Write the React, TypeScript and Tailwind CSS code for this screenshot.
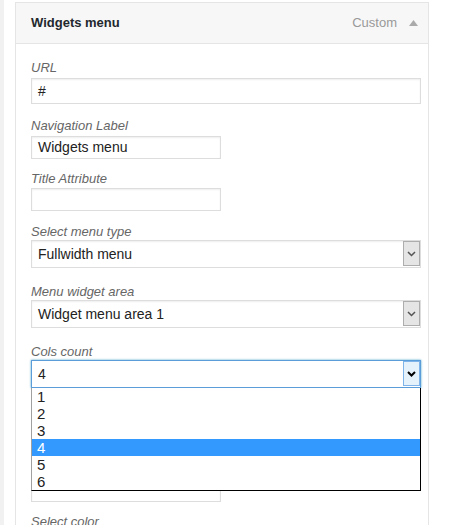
import React from 'react'

const font = { fontFamily: '"Liberation Sans", Arial, sans-serif' }

function Label({ children }: { children: React.ReactNode }) {
  return <div className="text-[13px] leading-[15px] italic text-[#666]">{children}</div>
}

function Chevron({ focused }: { focused?: boolean }) {
  return (
    <svg width="9" height="6" viewBox="0 0 9 6">
      <polyline
        points="1,1 4.5,4.5 8,1"
        fill="none"
        stroke={focused ? '#000' : '#555'}
        strokeWidth={focused ? 2 : 1.5}
      />
    </svg>
  )
}

function Select({ value, focused }: { value: string; focused?: boolean }) {
  return (
    <div
      className={
        'relative h-[28px] w-[390px] border bg-white pl-[6px] text-[14px] leading-[26px] text-[#222] ' +
        (focused ? 'border-[#5b9dd9] shadow-[0_0_2px_rgba(30,140,190,0.8)]' : 'border-[#ddd] shadow-[inset_0_1px_2px_rgba(0,0,0,0.07)]')
      }
    >
      {value}
      <div
        className={
          'absolute top-0 right-0 bottom-[1px] flex w-[17px] items-center justify-center border ' +
          (focused ? 'border-[#7eb4ea] bg-[#e5f1fb]' : 'border-[#adadad] bg-[#e5e5e5]')
        }
      >
        <Chevron focused={focused} />
      </div>
    </div>
  )
}

function Input({ value, wide, h }: { value?: string; wide?: boolean; h: string }) {
  return (
    <div
      className={
        'border border-[#ddd] bg-white pl-[6px] text-[14px] text-[#222] shadow-[inset_0_1px_2px_rgba(0,0,0,0.07)] ' +
        (wide ? 'w-[390px] ' : 'w-[190px] ') +
        h
      }
    >
      {value}
    </div>
  )
}

export default function App() {
  const options = ['1', '2', '3', '4', '5', '6']
  return (
    <div className="flex h-[525px] w-[453px] overflow-hidden bg-white" style={font}>
      <div className="w-[4px] shrink-0 bg-[#f1f1f1]" />
      <div className="mt-[2px] ml-[11px] w-[414px] shrink-0 border border-b-0 border-[#e5e5e5]">
        <div className="flex h-[41px] items-center border-b border-[#e5e5e5] bg-[#f7f7f7] pl-[15px] pr-[10px]">
          <span className="text-[13px] font-bold text-[#23282d]">Widgets menu</span>
          <span className="ml-auto text-[13px] text-[#999]">Custom</span>
          <svg className="ml-[12px]" width="9" height="6" viewBox="0 0 9 6">
            <polygon points="0,6 4.5,0 9,6" fill="#aaa" />
          </svg>
        </div>
        <div className="flex flex-col pt-[16px] pl-[15px] pr-[7px]">
          <Label>URL</Label>
          <div className="mt-[3px]">
            <Input value="#" wide h="h-[26px] leading-[24px]" />
          </div>

          <div className="mt-[14px]">
            <Label>Navigation Label</Label>
          </div>
          <div className="mt-[3px]">
            <Input value="Widgets menu" h="h-[23px] leading-[21px]" />
          </div>

          <div className="mt-[12px]">
            <Label>Title Attribute</Label>
          </div>
          <div className="mt-[2px]">
            <Input h="h-[23px]" />
          </div>

          <div className="mt-[13px]">
            <Label>Select menu type</Label>
          </div>
          <div className="mt-[1px]">
            <Select value="Fullwidth menu" />
          </div>

          <div className="mt-[16px]">
            <Label>Menu widget area</Label>
          </div>
          <div className="mt-[1px]">
            <Select value="Widget menu area 1" />
          </div>

          <div className="mt-[16px]">
            <Label>Cols count</Label>
          </div>
          <div className="relative z-10 mt-[1px]">
            <Select value="4" focused />
            <div className="absolute top-full left-0 w-[390px] border-r border-b border-l border-r-black border-b-black border-l-[#a0a0a0] bg-white">
              {options.map((o) => (
                <div
                  key={o}
                  className={
                    'h-[17px] pl-[5px] text-[15px] leading-[17px] ' +
                    (o === '4' ? 'bg-[#3399ff] text-white' : 'text-[#222]')
                  }
                >
                  {o}
                </div>
              ))}
            </div>
          </div>

          {/* field hidden under the open list */}
          <div className="mt-[91px]">
            <Input h="h-[23px]" />
          </div>

          <div className="mt-[12px]">
            <Label>Select color</Label>
          </div>
        </div>
      </div>
    </div>
  )
}
